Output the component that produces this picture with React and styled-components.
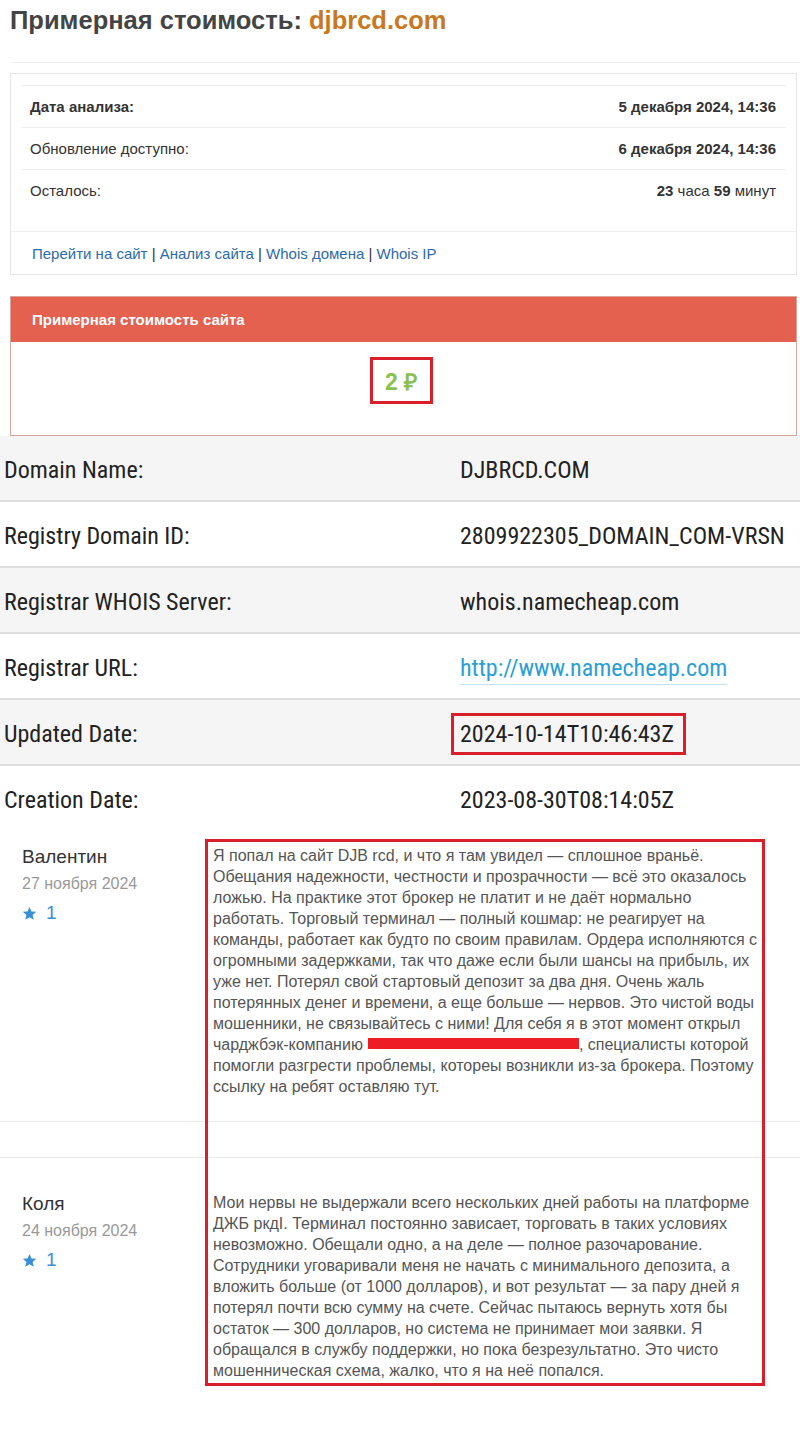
import styled, { createGlobalStyle } from "styled-components";

const Global = createGlobalStyle`
  body {
    margin: 0;
    background: #fff;
    font-family: "Liberation Sans", Arial, sans-serif;
  }
`;

const Page = styled.div`
  width: 800px;
  overflow: hidden;
`;

const Title = styled.h1`
  margin: 0 0 0 10px;
  padding: 6px 0 0;
  height: 56px;
  font-size: 25.5px;
  font-weight: bold;
  color: #444;
  line-height: 28px;
  border-bottom: 1px solid #f0f0f0;
  span {
    color: #c8781e;
  }
`;

const InfoBox = styled.div`
  margin: 10px 3px 0 10px;
  border: 1px solid #e6e6e6;
  padding: 11px 10px 0;
`;

const InfoTable = styled.div`
  margin-bottom: 20px;
`;

const InfoRow = styled.div`
  display: flex;
  justify-content: space-between;
  align-items: center;
  height: 41px;
  border-top: 1px solid #efefef;
  padding: 0 10px 0 9px;
  font-size: 15px;
  color: #333;
  font-weight: ${(p) => (p.$bold ? "bold" : "normal")};
`;

const Value = styled.span`
  font-weight: ${(p) => (p.$bold ? "bold" : "normal")};
  b {
    font-weight: bold;
  }
`;

const Links = styled.div`
  border-top: 1px solid #efefef;
  margin: 0 -10px;
  height: 42px;
  display: flex;
  align-items: center;
  padding: 0 21px;
  font-size: 15px;
  color: #333;
  a {
    color: #2d6aa8;
    text-decoration: none;
  }
`;

const CostPanel = styled.div`
  margin: 21px 3px 0 10px;
  border: 1px solid #d9a49c;
`;

const CostHeader = styled.div`
  background: #e4604f;
  height: 45px;
  display: flex;
  align-items: center;
  padding: 0 21px;
  color: #fff;
  font-size: 15px;
  font-weight: bold;
`;

const CostBody = styled.div`
  height: 93px;
  display: flex;
  justify-content: center;
  align-items: flex-start;
  padding-top: 15px;
  box-sizing: border-box;
`;

const Price = styled.div`
  border: 3px solid #d91f2b;
  width: 63px;
  height: 47px;
  box-sizing: border-box;
  display: flex;
  justify-content: center;
  align-items: center;
  font-size: 23px;
  font-weight: bold;
  color: #8cc04e;
  margin-left: -5px;
`;

const Whois = styled.div`
  font-family: "Roboto Condensed", Roboto, sans-serif;
`;

const WhoisRow = styled.div`
  display: grid;
  grid-template-columns: 456px 1fr;
  align-items: center;
  padding: 3px 0 0 4px;
  box-sizing: border-box;
  height: 66px;
  background: ${(p) => (p.$shade ? "#f5f5f5" : "#fff")};
  border-bottom: 2px solid ${(p) => (p.$last ? "transparent" : "#dedede")};
  font-size: 24px;
  color: #222;
`;

const WhoisValue = styled.span`
  justify-self: start;
`;

const UrlLink = styled.a`
  color: #2b9ed8;
  text-decoration: none;
  border-bottom: 1px solid #bfe1f2;
  padding-bottom: 2px;
`;

const Boxed = styled.span`
  border: 3px solid #d91f2b;
  padding: 4px 9px 4px 6px;
  margin-left: -9px;
`;

const Reviews = styled.div`
  position: relative;
`;

const Review = styled.div`
  display: grid;
  grid-template-columns: 213px 1fr;
  padding: ${(p) => p.$pad};
  border-bottom: 1px solid ${(p) => (p.$last ? "transparent" : "#ececec")};
`;

const Spacer = styled.div`
  height: 35px;
  border-bottom: 1px solid #ececec;
`;

const Author = styled.div`
  padding-left: 22px;
  padding-top: 2px;
`;

const Name = styled.div`
  font-size: 19px;
  color: #333;
  line-height: 20px;
`;

const DateText = styled.div`
  font-size: 16px;
  color: #999;
  line-height: 20px;
  margin-top: 7px;
`;

const Rating = styled.div`
  display: flex;
  align-items: center;
  gap: 9px;
  margin-top: 9px;
  color: #3a8fd6;
  font-size: 19px;
  line-height: 20px;
`;

const Body = styled.div`
  width: 548px;
  font-size: 16px;
  line-height: 21px;
  color: #555;
  white-space: nowrap;
`;

const Redacted = styled.span`
  display: inline-block;
  width: 211px;
  height: 11px;
  background: #ee1c25;
  vertical-align: 1px;
  margin-left: 5px;
`;

const Frame = styled.div`
  position: absolute;
  left: 205px;
  top: 7px;
  width: 560px;
  height: 547px;
  border: 3px solid #d91f2b;
  box-sizing: border-box;
  pointer-events: none;
`;

function Star() {
  return (
    <svg width="15" height="15" viewBox="0 0 24 24" fill="#3a8fd6">
      <path d="M12 1.5l3.2 7.1 7.6.7-5.8 5.1 1.8 7.6L12 18l-6.8 4 1.8-7.6-5.8-5.1 7.6-.7z" />
    </svg>
  );
}

const whois = [
  ["Domain Name:", "DJBRCD.COM"],
  ["Registry Domain ID:", "2809922305_DOMAIN_COM-VRSN"],
  ["Registrar WHOIS Server:", "whois.namecheap.com"],
  ["Registrar URL:", "url"],
  ["Updated Date:", "boxed"],
  ["Creation Date:", "2023-08-30T08:14:05Z"],
];

export default function App() {
  return (
    <Page>
      <Global />
      <Title>
        Примерная стоимость: <span>djbrcd.com</span>
      </Title>

      <InfoBox>
        <InfoTable>
          <InfoRow $bold>
            <span>Дата анализа:</span>
            <Value $bold>5 декабря 2024, 14:36</Value>
          </InfoRow>
          <InfoRow>
            <span>Обновление доступно:</span>
            <Value $bold>6 декабря 2024, 14:36</Value>
          </InfoRow>
          <InfoRow>
            <span>Осталось:</span>
            <Value>
              <b>23</b> часа <b>59</b> минут
            </Value>
          </InfoRow>
        </InfoTable>
        <Links>
          <a href="#">Перейти на сайт</a>&nbsp;|&nbsp;<a href="#">Анализ сайта</a>&nbsp;|&nbsp;
          <a href="#">Whois домена</a>&nbsp;|&nbsp;<a href="#">Whois IP</a>
        </Links>
      </InfoBox>

      <CostPanel>
        <CostHeader>Примерная стоимость сайта</CostHeader>
        <CostBody>
          <Price>2 ₽</Price>
        </CostBody>
      </CostPanel>

      <Whois>
        {whois.map(([label, value], i) => (
          <WhoisRow key={label} $shade={i % 2 === 0} $last={i === whois.length - 1}>
            <span>{label}</span>
            <WhoisValue>
              {value === "url" ? (
                <UrlLink href="#">http://www.namecheap.com</UrlLink>
              ) : value === "boxed" ? (
                <Boxed>2024-10-14T10:46:43Z</Boxed>
              ) : (
                value
              )}
            </WhoisValue>
          </WhoisRow>
        ))}
      </Whois>

      <Reviews>
        <Review $pad="13px 0 24px">
          <Author>
            <Name>Валентин</Name>
            <DateText>27 ноября 2024</DateText>
            <Rating>
              <Star /> 1
            </Rating>
          </Author>
          <Body>
            Я попал на сайт DJB rcd, и что я там увидел — сплошное враньё.<br />
            Обещания надежности, честности и прозрачности — всё это оказалось<br />
            ложью. На практике этот брокер не платит и не даёт нормально<br />
            работать. Торговый терминал — полный кошмар: не реагирует на<br />
            команды, работает как будто по своим правилам. Ордера исполняются с<br />
            огромными задержками, так что даже если были шансы на прибыль, их<br />
            уже нет. Потерял свой стартовый депозит за два дня. Очень жаль<br />
            потерянных денег и времени, а еще больше — нервов. Это чистой воды<br />
            мошенники, не связывайтесь с ними! Для себя я в этот момент открыл<br />
            чарджбэк-компанию<Redacted />, специалисты которой<br />
            помогли разгрести проблемы, котореы возникли из-за брокера. Поэтому<br />
            ссылку на ребят оставляю тут.
          </Body>
        </Review>
        <Spacer />
        <Review $pad="34px 0 40px" $last>
          <Author>
            <Name>Коля</Name>
            <DateText>24 ноября 2024</DateText>
            <Rating>
              <Star /> 1
            </Rating>
          </Author>
          <Body>
            Мои нервы не выдержали всего нескольких дней работы на платформе<br />
            ДЖБ ркдІ. Терминал постоянно зависает, торговать в таких условиях<br />
            невозможно. Обещали одно, а на деле — полное разочарование.<br />
            Сотрудники уговаривали меня не начать с минимального депозита, а<br />
            вложить больше (от 1000 долларов), и вот результат — за пару дней я<br />
            потерял почти всю сумму на счете. Сейчас пытаюсь вернуть хотя бы<br />
            остаток — 300 долларов, но система не принимает мои заявки. Я<br />
            обращался в службу поддержки, но пока безрезультатно. Это чисто<br />
            мошенническая схема, жалко, что я на неё попался.
          </Body>
        </Review>
        <Frame />
      </Reviews>
    </Page>
  );
}
